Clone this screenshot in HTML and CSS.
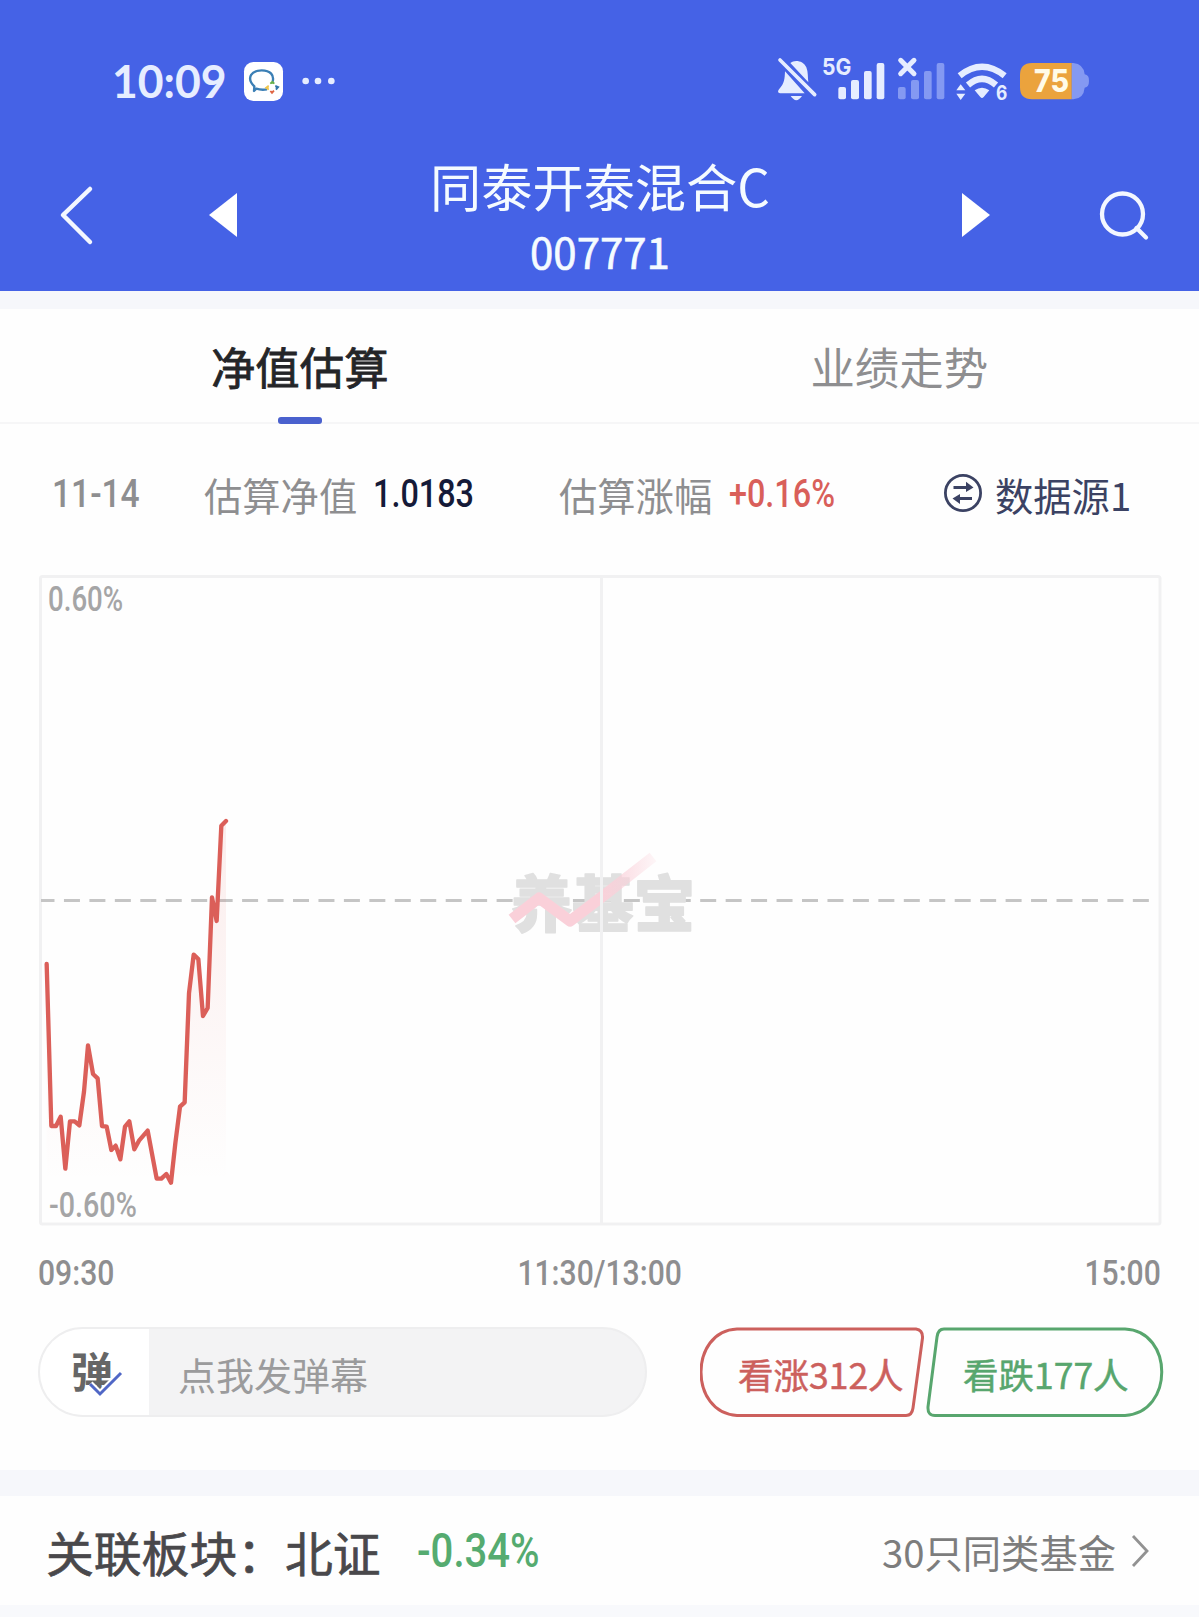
FILE: index.html
```
<!DOCTYPE html>
<html lang="zh-CN">
<head>
    <meta charset="utf-8">
    <title>同泰开泰混合C</title>
    <link rel="stylesheet" href="styles.css">
</head>
<body>
    <header class="header">
        <div class="status-bar">
            <svg class="status-left" width="280" height="90" viewBox="0 0 840 270">
                <text class="clock" x="66" y="173" textLength="344" lengthAdjust="spacingAndGlyphs">10:09</text>
                <rect x="462" y="66" width="117" height="117" rx="28" fill="#fff"/>
                <path d="M531 148 Q514 151 499 146 L492 153 L493 139 C466 112 487 91 515 91 C542 91 553 106 548 125" fill="none" stroke="#3b7fb5" stroke-width="7" stroke-linejoin="round"/>
                <path d="M541 131 l6 -6 6 6" fill="#67b04b" stroke="#67b04b" stroke-width="5"/>
                <path d="M556 137 l9 4 -7 8" fill="#3377aa" stroke="#3377aa" stroke-width="5"/>
                <path d="M541 153 l5 6 6 -7" fill="#df6544" stroke="#df6544" stroke-width="5"/>
                <path d="M536 137 l-8 6 8 6" fill="#efc54d" stroke="#efc54d" stroke-width="5"/>
                <g fill="#e6edff">
                    <circle cx="647" cy="123" r="10"/>
                    <circle cx="684" cy="123" r="10"/>
                    <circle cx="724" cy="123" r="10"/>
                </g>
            </svg>
            <svg class="status-right" width="350" height="80" viewBox="0 0 1050 240">
                <g fill="#e6edff">
                    <path d="M91 69 C103 58 130 61 139 82 C145 96 143 113 145 127 Z"/>
                    <path d="M75 94 L134 160 H60 Q50 158 57 148 C74 130 74 115 75 94 Z"/>
                    <path d="M92 168 H126 Q109 193 92 168 Z"/>
                    <path d="M60 60 L164 164" stroke="#e6edff" stroke-width="11" stroke-linecap="round"/>
                    <text class="net" x="186" y="106" textLength="88" lengthAdjust="spacingAndGlyphs">5G</text>
                    <rect x="235" y="141" width="23" height="37" rx="6"/>
                    <rect x="273" y="120" width="24" height="58" rx="6"/>
                    <rect x="312" y="93" width="23" height="85" rx="6"/>
                    <rect x="350" y="69" width="23" height="109" rx="6"/>
                </g>
                <path d="M422 61 L462 101 M462 61 L422 101" stroke="#e6edff" stroke-width="15" stroke-linecap="round"/>
                <g fill="#8499f2">
                    <rect x="414" y="141" width="23" height="37" rx="6"/>
                    <rect x="453" y="120" width="24" height="58" rx="6"/>
                    <rect x="492" y="93" width="23" height="85" rx="6"/>
                    <rect x="530" y="69" width="23" height="109" rx="6"/>
                </g>
                <g fill="none" stroke="#e6edff" stroke-width="19">
                    <path d="M599 107 Q666 53 734 107"/>
                    <path d="M624 135 Q666 98 708 135"/>
                </g>
                <path d="M644 151 Q666 136 688 151 L671 171 Q666 177 661 171 Z" fill="#e6edff"/>
                <path d="M589 151 L602 133 L616 151 Z M589 161 H616 L602 180 Z" fill="#e6edff"/>
                <text class="wifi-gen" x="708" y="181" textLength="34" lengthAdjust="spacingAndGlyphs">6</text>
                <path d="M935 69 H940 Q971 72 974 103 Q988 105 987 123 Q987 142 974 143 Q971 176 940 178 H935 Z" fill="#8499f2"/>
                <path d="M935 69 H816 Q780 69 780 105 V142 Q780 178 816 178 H935 Z" fill="#eba33d"/>
                <text class="battery" x="822" y="157" textLength="105" lengthAdjust="spacingAndGlyphs">75</text>
            </svg>
        </div>
        <nav class="nav">
            <svg width="60" height="80" viewBox="0 0 60 80"><path d="M50 14 L23 40 L50 67" fill="none" stroke="#f3f7ff" stroke-width="4.5" stroke-linecap="round" stroke-linejoin="round"/></svg>
            <svg width="40" height="60" viewBox="0 0 40 60"><path d="M30 8 V52 L2 30 Z" fill="#fff"/></svg>
            <div class="title">
                <h1>同泰开泰混合C</h1>
                <p>007771</p>
            </div>
            <svg width="40" height="60" viewBox="0 0 40 60"><path d="M5 8 V52 L33 30 Z" fill="#fff"/></svg>
            <svg width="60" height="60" viewBox="0 0 60 60"><g fill="none" stroke="#f3f7ff" stroke-width="4.3" stroke-linecap="round"><circle cx="30.500" cy="29" r="20.500"/><path d="M44.500 43 L54 52.500"/></g></svg>
        </nav>
    </header>

    <div class="tabs">
        <div class="tab active">净值估算</div>
        <div class="tab">业绩走势</div>
    </div>

    <div class="stats">
        <span class="num">11-14</span>
        <span>估算净值</span>
        <span class="num nav-value">1.0183</span>
        <span>估算涨幅</span>
        <span class="num up">+0.16%</span>
        <div class="source">
            <svg width="40" height="40" viewBox="0 0 40 40" fill="none" stroke="#3b4263" stroke-width="2.8">
                <circle cx="20" cy="19" r="17.600"/>
                <path d="M10.500 13.500 H28 M29 24.500 H12"/>
                <path d="M23 7.800 L30.500 13.500 L23 18 Z M17 20 L9.500 24.500 L17 30 Z" fill="#3b4263" stroke="none"/>
            </svg>
            <span>数据源1</span>
        </div>
    </div>

    <div class="chart">
        <svg width="1124" height="652" viewBox="38 574 1124 652">
            <defs>
                <linearGradient id="area" x1="0" y1="0" x2="0" y2="1">
                    <stop offset="0" stop-color="#e2574f" stop-opacity=".1"/>
                    <stop offset="1" stop-color="#e2574f" stop-opacity="0"/>
                </linearGradient>
                <linearGradient id="swoosh" gradientUnits="userSpaceOnUse" x1="600" y1="0" x2="655" y2="0">
                    <stop offset="0" stop-color="#fad0d9"/>
                    <stop offset="1" stop-color="#fad0d9" stop-opacity=".2"/>
                </linearGradient>
            </defs>
            <!-- grid -->
            <rect x="40.500" y="576.500" width="1119.500" height="647.500" rx="2" fill="none" stroke="#f1f1f2" stroke-width="3"/>
            <path d="M41 900.500 H1150" stroke="#c5c5c5" stroke-width="3" stroke-dasharray="16 9.450" stroke-dashoffset="2.500"/>
            <!-- watermark -->
            <text class="watermark" x="511" y="927" textLength="184" lengthAdjust="spacingAndGlyphs">养基宝</text>
            <path d="M512 919 L539 898 L570 921 L607 893 L653 857" fill="none" stroke="url(#swoosh)" stroke-width="11" stroke-linejoin="round"/>
            <path d="M601.500 577 V1224" stroke="#f1f1f2" stroke-width="3"/>
            <!-- price line -->
            <g transform="translate(20 780) scale(.33333)">
                <path fill="url(#area)" d="M80 550 94 1040 108 1040 122 1010 136 1168 150 1024 164 1024 178 1038 192 935 204 794 219 882 233 895 246 1038 260 1040 274 1110 287 1097 301 1140 315 1040 328 1022 343 1110 357 1082 383 1052 410 1196 424 1196 439 1182 453 1210 466 1090 480 980 494 967 507 640 521 522 535 537 549 710 563 684 576 350 590 425 604 137 618 123 V1210 H80 Z"/>
                <path fill="none" stroke="#db5f59" stroke-width="13" stroke-linecap="round" stroke-linejoin="round" d="M80 552 94 1038 108 1038 122 1010 136 1166 150 1024 164 1024 178 1036 192 935 204 796 219 882 233 895 246 1038 260 1040 274 1110 287 1097 301 1138 315 1040 328 1024 343 1108 357 1082 383 1052 410 1196 424 1196 439 1182 453 1208 466 1090 480 980 494 967 507 640 521 524 535 537 549 708 563 684 576 352 590 423 604 137 618 123"/>
            </g>
        </svg>
        <span class="num limit top">0.60%</span>
        <span class="num limit bottom">-0.60%</span>
    </div>
    <div class="axis">
        <span class="num">09:30</span>
        <span class="num">11:30/13:00</span>
        <span class="num">15:00</span>
    </div>

    <div class="actions">
        <div class="danmu">
            <div class="danmu-toggle">
                弹
                <svg class="tick" width="40" height="28" viewBox="0 0 40 28"><path d="M4 15 L14 25 L35 4" fill="none" stroke="#fff" stroke-width="7"/><path d="M4 15 L14 25 L35 4" fill="none" stroke="#5067c6" stroke-width="3"/></svg>
            </div>
            <div class="danmu-input">点我发弹幕</div>
        </div>
        <div class="vote vote-up">
            <svg width="226" height="92" viewBox="0 0 226 92"><path d="M37 2 H216 Q223 3 222.500 11 L213 81 Q212 88.500 206 88.500 H37 C-11 86 -11 4 37 2 Z"/></svg>
            <span>看涨312人</span>
        </div>
        <div class="vote vote-down">
            <svg width="238" height="92" viewBox="0 0 238 92"><path d="M199 2 H18 Q12 2 11 10 L2 80 Q1.500 88.500 9 88.500 H199 C248 86 248 4 199 2 Z"/></svg>
            <span>看跌177人</span>
        </div>
    </div>

    <div class="sector">
        <span class="sector-name">关联板块：北证</span>
        <span class="num down">-0.34%</span>
        <span class="similar">30只同类基金</span>
        <svg width="20" height="36" viewBox="0 0 20 36"><path d="M3 3 L17 18 L3 33" fill="none" stroke="#929292" stroke-width="2.800"/></svg>
    </div>
</body>
</html>
```
FILE: styles.css
```
* {
    box-sizing: border-box;
}
body {
    margin: 0;
    width: 1199px;
    height: 1617px;
    overflow: hidden;
    background: #fefefe;
    font-family: "Noto Sans CJK SC", sans-serif;
    color: #8e8e90;
}
svg {
    display: block;
    flex: none;
}
h1, p {
    margin: 0;
    font-weight: 400;
}
.num {
    display: inline-block;
    font-family: Roboto, sans-serif;
    font-weight: 500;
    white-space: nowrap;
    transform: scaleX(.86);
    transform-origin: left center;
}

/* header */
.header {
    height: 291px;
    background: #4562e6;
}
.status-bar {
    height: 140px;
    padding: 40px 89px 0 90px;
    display: flex;
    justify-content: space-between;
}
.clock {
    font: 700 139px Lato, sans-serif;
    fill: #e6edff;
}
.net {
    font: 700 70px Inter, sans-serif;
}
.wifi-gen {
    font: 700 60px Inter, sans-serif;
    fill: #e6edff;
}
.battery {
    font: 800 92px Inter, sans-serif;
    fill: #fffbe8;
}
.nav {
    display: flex;
    align-items: center;
    height: 149px;
    padding: 0 47px 0 40px;
}
.nav > svg:nth-child(2) {
    margin-left: 107px;
}
.nav > svg:nth-child(4) {
    margin-right: 95px;
}
.title {
    flex: 1;
    color: #f5fbff;
    text-align: center;
    padding: 2px 4px 0 0;
}
.title h1 {
    font-size: 51.2px;
    line-height: 70px;
}
.title p {
    font-size: 42px;
    line-height: 62px;
    -webkit-text-stroke: .6px currentColor;
}

/* tabs */
.tabs {
    display: flex;
    height: 133px;
    border-top: 18px solid #f6f7fb;
    border-bottom: 2px solid #f6f6f7;
}
.tab {
    position: relative;
    flex: 1;
    text-align: center;
    font-size: 44.4px;
    line-height: 113px;
}
.tab.active {
    color: #242528;
    -webkit-text-stroke: .8px currentColor;
}
.tab.active::after {
    content: "";
    position: absolute;
    left: 278px;
    bottom: -2px;
    width: 44px;
    height: 7px;
    border-radius: 3px;
    background: #4a61ce;
}

/* estimate row */
.stats {
    display: grid;
    grid-template-columns: 152px 169px 186px 170px 214px 1fr;
    align-items: center;
    height: 140px;
    padding-left: 52px;
    font-size: 38.3px;
    white-space: nowrap;
}
.stats .num {
    font-size: 39px;
}
.stats .nav-value {
    color: #151a38;
    transform: scaleX(.83);
}
.stats .up {
    color: #d95f5a;
    transform: scaleX(.83);
}
.source {
    display: flex;
    align-items: center;
    gap: 12px;
    color: #3b4263;
}

/* chart */
.chart {
    position: relative;
    margin: 10px 0 0 38px;
}
.limit {
    position: absolute;
    left: 10px;
    font-size: 35px;
    line-height: 36px;
    color: #a5a5a6;
}
.limit.top {
    top: 8px;
    transform: scaleX(.79);
}
.limit.bottom {
    bottom: 2px;
    left: 11px;
    transform: scaleX(.82);
}
.axis {
    display: flex;
    justify-content: space-between;
    height: 101px;
    padding: 27px 38px 0 38px;
    font-size: 35px;
    line-height: 41px;
}
.axis .num:nth-child(2) {
    transform-origin: center;
}
.axis .num:nth-child(3) {
    transform-origin: right center;
}

/* danmu and votes */
.actions {
    display: flex;
    height: 143px;
    padding-left: 38px;
    align-items: flex-start;
}
.danmu {
    display: flex;
    width: 609px;
    height: 90px;
    border: 2px solid #eeeeef;
    border-radius: 45px;
    background: #f3f3f4;
    overflow: hidden;
    margin-right: 53px;
}
.danmu-toggle {
    position: relative;
    width: 109px;
    padding-left: 31px;
    background: #fff;
    color: #666;
    font-size: 42px;
    line-height: 81px;
    font-weight: 700;
}
.tick {
    position: absolute;
    left: 46px;
    top: 40px;
}
.danmu-input {
    padding-left: 29px;
    font-size: 38px;
    line-height: 89px;
    color: #9b9b9c;
}
.vote {
    display: grid;
    font-size: 35.5px;
    line-height: 93px;
    -webkit-text-stroke: .5px currentColor;
}
.vote > * {
    grid-area: 1 / 1;
}
.vote path {
    fill: none;
    stroke: currentColor;
    stroke-width: 3;
}
.vote-up {
    color: #cc605d;
}
.vote-up span {
    padding-left: 38px;
}
.vote-down {
    color: #58a66e;
}
.vote-down span {
    padding-left: 37px;
}

/* drawn in the middle of the chart, under the price line */
.watermark {
    font: 900 61px "Noto Sans CJK SC", sans-serif;
    fill: #e0e0e0;
    stroke: #e0e0e0;
    stroke-width: 1.5;
    stroke-linejoin: round;
}

/* sector row */
.sector {
    display: flex;
    align-items: center;
    height: 147px;
    padding: 0 49px 0 46px;
    border-top: 26px solid #f6f7fb;
    border-bottom: 12px solid #f8f9fc;
}
.sector-name {
    font-size: 47.8px;
    padding-top: 2px;
    color: #49484b;
    -webkit-text-stroke: .7px currentColor;
}
.sector .down {
    margin-left: 36px;
    font-size: 48px;
    color: #55ab70;
    transform: scaleX(.835);
}
.similar {
    margin-left: auto;
    margin-right: 14px;
    padding-top: 2px;
    font-size: 38.3px;
    color: #7d7d7d;
}
```
